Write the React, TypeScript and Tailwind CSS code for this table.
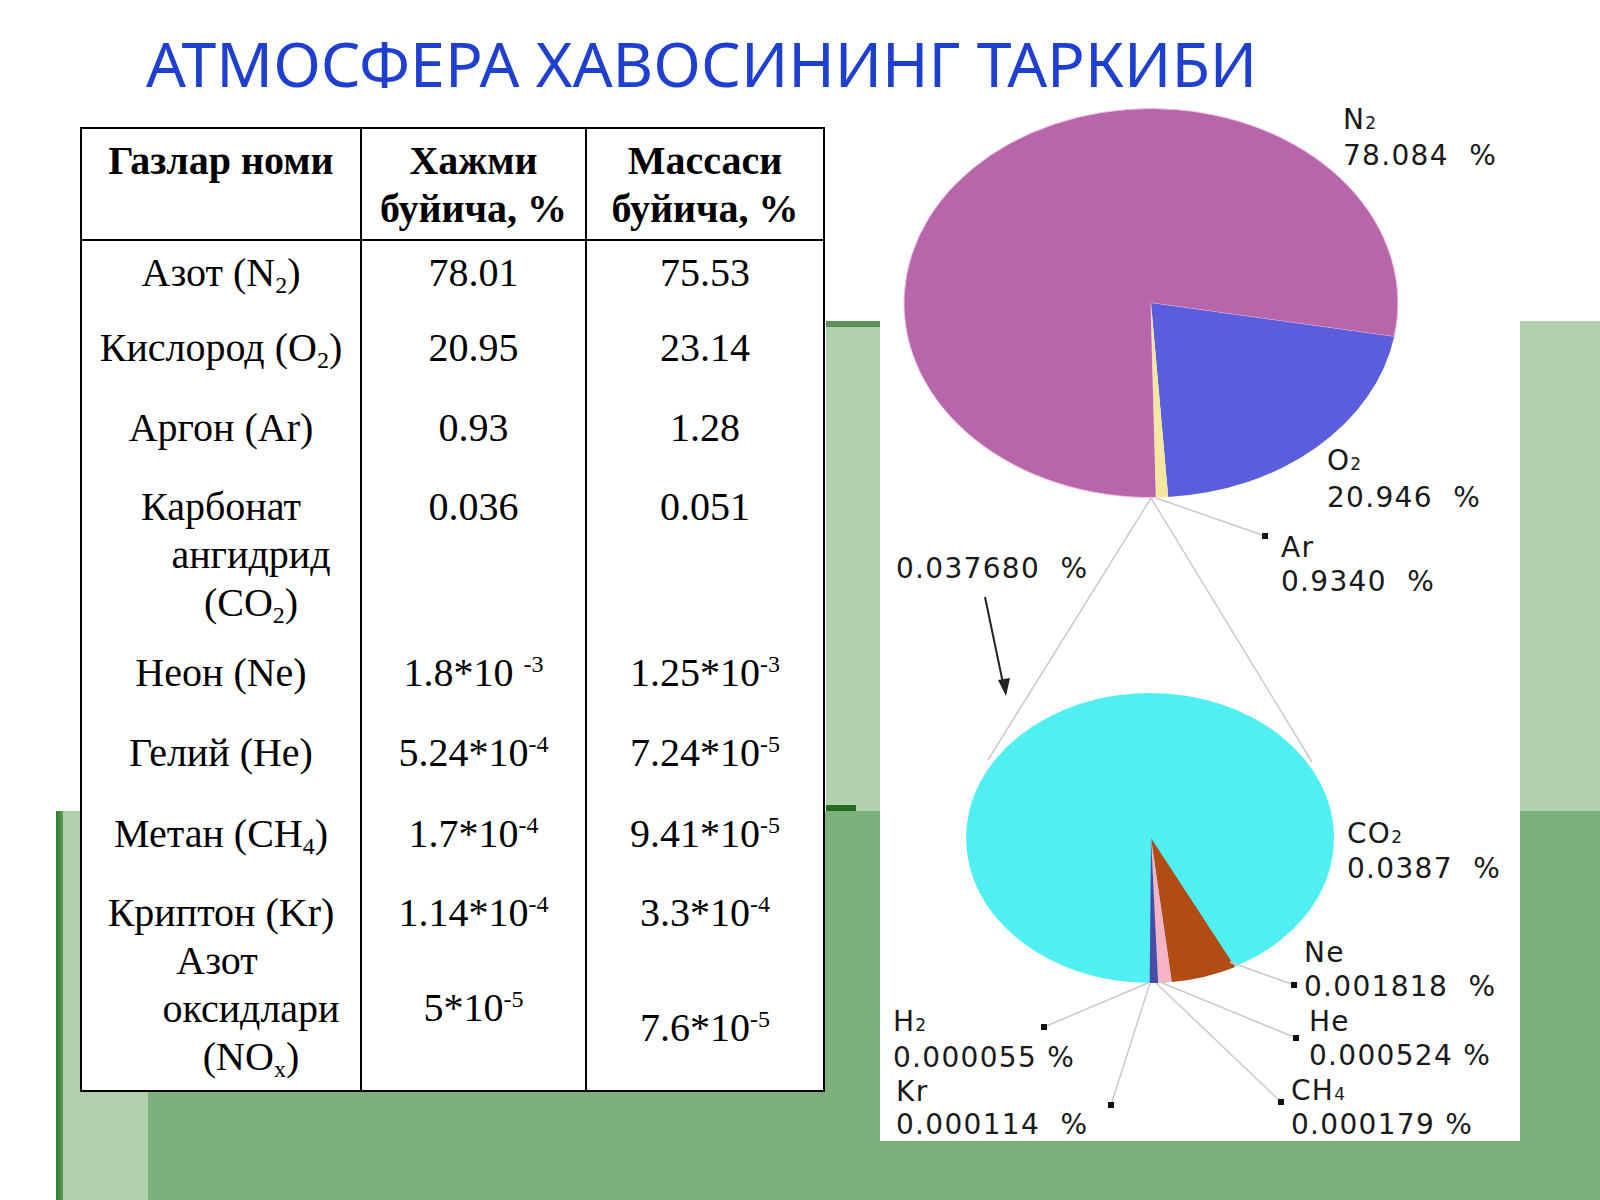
import React from 'react';

type Row = {
  h: string;
  pt: string;
  name: React.ReactNode;
  vol: React.ReactNode;
  mass: React.ReactNode;
  volPt?: string;
  massPt?: string;
};

const Sub = ({ children }: { children: React.ReactNode }) => (
  <span className="text-[24px] leading-none align-[-7px]">{children}</span>
);

const Sup = ({ children }: { children: React.ReactNode }) => (
  <span className="text-[24px] leading-none align-[14px]">{children}</span>
);

const ROWS: Row[] = [
  { h: 'h-[69px]', pt: 'pt-[8px]', name: <div>Азот (N<Sub>2</Sub>)</div>, vol: '78.01', mass: '75.53' },
  { h: 'h-[80px]', pt: 'pt-[14px]', name: <div>Кислород (O<Sub>2</Sub>)</div>, vol: '20.95', mass: '23.14' },
  { h: 'h-[78px]', pt: 'pt-[14px]', name: <div>Аргон (Ar)</div>, vol: '0.93', mass: '1.28' },
  {
    h: 'h-[172px]',
    pt: 'pt-[15px]',
    name: (
      <>
        <div>Карбонат</div>
        <div className="pl-[60px]">ангидрид</div>
        <div className="pl-[60px]">(CO<Sub>2</Sub>)</div>
      </>
    ),
    vol: '0.036',
    mass: '0.051',
  },
  { h: 'h-[74px]', pt: 'pt-[9px]', name: <div>Неон (Ne)</div>, vol: <>1.8*10 <Sup>-3</Sup></>, mass: <>1.25*10<Sup>-3</Sup></> },
  { h: 'h-[81px]', pt: 'pt-[15px]', name: <div>Гелий (He)</div>, vol: <>5.24*10<Sup>-4</Sup></>, mass: <>7.24*10<Sup>-5</Sup></> },
  { h: 'h-[79px]', pt: 'pt-[15px]', name: <div>Метан (CH<Sub>4</Sub>)</div>, vol: <>1.7*10<Sup>-4</Sup></>, mass: <>9.41*10<Sup>-5</Sup></> },
  { h: 'h-[63px]', pt: 'pt-[15px]', name: <div>Криптон (Kr)</div>, vol: <>1.14*10<Sup>-4</Sup></>, mass: <>3.3*10<Sup>-4</Sup></> },
  {
    h: 'h-[153px]',
    pt: 'pt-0',
    name: (
      <>
        <div className="pr-[8px]">Азот</div>
        <div className="pl-[60px]">оксидлари</div>
        <div className="pl-[60px]">(NO<Sub>x</Sub>)</div>
      </>
    ),
    vol: <>5*10<Sup>-5</Sup></>,
    mass: <>7.6*10<Sup>-5</Sup></>,
    volPt: 'pt-[47px]',
    massPt: 'pt-[67px]',
  },
];

const GasTable = () => (
  <div className="mt-[27px] ml-[80px] w-[745px] border-2 border-black bg-white text-black font-['Liberation_Serif',serif] text-[40px] leading-[48px]">
    <div className="grid grid-cols-[280px_225px_236px] border-b-2 border-black h-[112px] font-bold text-center">
      <div className="border-r-2 border-black pt-[8px]">Газлар номи</div>
      <div className="border-r-2 border-black pt-[8px]">
        <div>Хажми</div>
        <div>буйича, %</div>
      </div>
      <div className="pt-[8px]">
        <div>Массаси</div>
        <div>буйича, %</div>
      </div>
    </div>
    {ROWS.map((r, i) => (
      <div key={i} className={`grid grid-cols-[280px_225px_236px] text-center ${r.h}`}>
        <div className={`border-r-2 border-black ${r.pt}`}>{r.name}</div>
        <div className={`border-r-2 border-black ${r.volPt ?? r.pt}`}>{r.vol}</div>
        <div className={r.massPt ?? r.pt}>{r.mass}</div>
      </div>
    ))}
  </div>
);

// point on ellipse, screen angle in degrees
const pt = (cx: number, cy: number, rx: number, ry: number, deg: number) => {
  const a = (deg * Math.PI) / 180;
  return [cx + rx * Math.cos(a), cy + ry * Math.sin(a)];
};

const wedge = (cx: number, cy: number, rx: number, ry: number, a0: number, a1: number) => {
  const [x0, y0] = pt(cx, cy, rx, ry, a0);
  const [x1, y1] = pt(cx, cy, rx, ry, a1);
  const large = a1 - a0 > 180 ? 1 : 0;
  return `M${cx},${cy} L${x0.toFixed(1)},${y0.toFixed(1)} A${rx},${ry} 0 ${large} 1 ${x1.toFixed(1)},${y1.toFixed(1)} Z`;
};

const Label = ({ x, y, children }: { x: number; y: number; children: React.ReactNode }) => (
  <text x={x} y={y} fontSize={28} letterSpacing={1.3} fill="#1a1a1a" style={{ whiteSpace: 'pre' }}>
    {children}
  </text>
);

const Dot = ({ x, y }: { x: number; y: number }) => <rect x={x - 3} y={y - 3} width={6} height={6} fill="#111" />;

const Chart = () => {
  const line = '#c9c9c9';
  return (
    <div className="ml-[55px] w-[640px] h-[1041px] bg-white">
      <svg width="640" height="1041" viewBox="0 0 640 1041" fontFamily="'DejaVu Sans', sans-serif">
        {/* main pie */}
        <path d={wedge(271, 203, 247, 194.5, 88.8, 370)} fill="#b866aa" stroke="#f3c6ea" strokeWidth={1} />
        <path d={wedge(271, 203, 247, 194.5, 10, 86)} fill="#5a5edd" />
        <path d={wedge(271, 203, 247, 194.5, 86, 88.8)} fill="#f6e7a0" />

        {/* connector lines */}
        <line x1={271} y1={398} x2={108} y2={660} stroke={line} strokeWidth={1.5} />
        <line x1={271} y1={398} x2={432} y2={662} stroke={line} strokeWidth={1.5} />
        <line x1={276} y1={398} x2={385} y2={436} stroke={line} strokeWidth={1.5} />
        <Dot x={385} y={436} />

        {/* arrow */}
        <line x1={105} y1={497} x2={124} y2={588} stroke="#222" strokeWidth={2} />
        <path d="M118,580 L126,596 L130,578 Z" fill="#222" />

        {/* second pie */}
        <ellipse cx={270} cy={738} rx={184} ry={145} fill="#50f0f2" />
        <path d={wedge(271, 738, 184, 145, 62.8, 83.5)} fill="#b24c12" />
        <path d={wedge(271, 738, 184, 145, 83.5, 87.8)} fill="#f5b3c4" />
        <path d={wedge(271, 738, 184, 145, 87.8, 90.4)} fill="#4a4aa8" />

        <line x1={350} y1={862} x2={414} y2={885} stroke={line} strokeWidth={1.5} />
        <line x1={280} y1={882} x2={416} y2={938} stroke={line} strokeWidth={1.5} />
        <line x1={276} y1={883} x2={401} y2={1002} stroke={line} strokeWidth={1.5} />
        <line x1={268} y1={883} x2={164} y2={927} stroke={line} strokeWidth={1.5} />
        <line x1={270} y1={883} x2={231} y2={1005} stroke={line} strokeWidth={1.5} />
        <Dot x={414} y={885} />
        <Dot x={416} y={938} />
        <Dot x={401} y={1002} />
        <Dot x={164} y={927} />
        <Dot x={231} y={1005} />

        <Label x={463} y={29}>N<tspan fontSize={17}>2</tspan></Label>
        <Label x={463} y={65}>78.084  %</Label>
        <Label x={447} y={370}>O<tspan fontSize={17}>2</tspan></Label>
        <Label x={447} y={407}>20.946  %</Label>
        <Label x={401} y={457}>Ar</Label>
        <Label x={401} y={491}>0.9340  %</Label>
        <Label x={16} y={478}>0.037680  %</Label>

        <Label x={467} y={743}>CO<tspan fontSize={17}>2</tspan></Label>
        <Label x={467} y={778}>0.0387  %</Label>
        <Label x={424} y={862}>Ne</Label>
        <Label x={424} y={896}>0.001818  %</Label>
        <Label x={429} y={931}>He</Label>
        <Label x={429} y={965}>0.000524 %</Label>
        <Label x={411} y={1000}>CH<tspan fontSize={17}>4</tspan></Label>
        <Label x={411} y={1034}>0.000179 %</Label>
        <Label x={13} y={931}>H<tspan fontSize={17}>2</tspan></Label>
        <Label x={13} y={967}>0.000055 %</Label>
        <Label x={16} y={1001}>Kr</Label>
        <Label x={16} y={1034}>0.000114  %</Label>
      </svg>
    </div>
  );
};

const Backdrop = () => (
  <div className="absolute inset-0 flex flex-col">
    <div className="h-[321px]" />
    <div className="h-[490px] flex">
      <div className="w-[826px]" />
      <div className="w-[54px] bg-[#b1d0ae] flex flex-col">
        <div className="h-[6px] bg-[#5e8f5c]" />
        <div className="flex-1" />
        <div className="h-[6px] w-[30px] bg-[#1f6b22]" />
      </div>
      <div className="flex-1" />
      <div className="w-[80px] bg-[#b1d0ae]" />
    </div>
    <div className="flex-1 flex">
      <div className="w-[56px]" />
      <div className="w-[7px] bg-gradient-to-r from-[#2f7d30] to-[#5d9c5b]" />
      <div className="w-[85px] bg-[#afd0ab]" />
      <div className="flex-1 bg-[#7db17b]" />
    </div>
  </div>
);

export default function App() {
  return (
    <div className="relative w-[1600px] h-[1200px] bg-white overflow-hidden">
      <Backdrop />
      <div className="relative">
        <div className="h-[100px] pt-[32px] pl-[146px] font-['Noto_Sans',sans-serif] text-[62.6px] leading-[62px] text-[#1e3fcf] whitespace-nowrap">
          АТМОСФЕРА ХАВОСИНИНГ ТАРКИБИ
        </div>
        <div className="flex items-start">
          <GasTable />
          <Chart />
        </div>
      </div>
    </div>
  );
}
